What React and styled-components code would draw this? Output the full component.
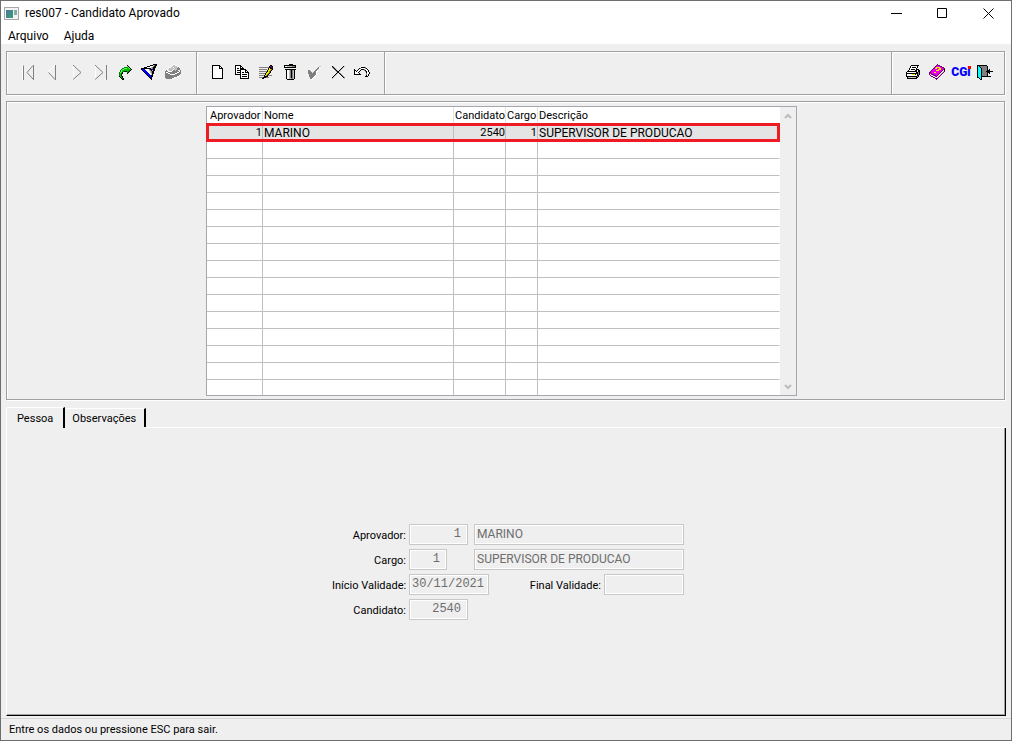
import React from "react";
import styled, { createGlobalStyle } from "styled-components";

const GlobalStyle = createGlobalStyle`
  * {
    box-sizing: border-box;
  }
  body {
    margin: 0;
    color: #000;
    font-family: Roboto, "Liberation Sans", sans-serif;
    font-size: 11px;
    line-height: 16px;
  }
  button {
    padding: 0;
    border: none;
    background: none;
    color: inherit;
    font: inherit;
  }
`;

const Window = styled.div`
  display: flex;
  flex-direction: column;
  min-height: 100vh;
  border: 1px solid #6e6e6e;
  background-color: #efefef;
`;

const TitleBar = styled.header`
  display: flex;
  align-items: center;
  height: 25px;
  padding: 0 0 1px 3px;
  background-color: white;
`;

const Title = styled.h1`
  flex: 1;
  margin: 0 0 0 6px;
  font-size: 12px;
  font-weight: normal;
`;

const WindowButton = styled.button`
  display: flex;
  align-items: center;
  justify-content: center;
  width: 46px;
  height: 24px;
`;

const MenuBar = styled.nav`
  display: flex;
  align-items: flex-end;
  gap: 15px;
  height: 18px;
  padding-left: 7px;
  background-color: white;
  font-size: 12px;
`;

const Groove = styled.div`
  border: 1px solid #a0a0a0;
  box-shadow: 1px 1px 0 white, inset 1px 1px 0 white;
`;

const ToolBar = styled(Groove)`
  display: flex;
  height: 44px;
  margin: 7px 6px 0 5px;
`;

const ToolGroup = styled.div`
  display: flex;
  align-items: center;
  padding: 0 ${props => props.$padEnd}px 2px ${props => props.$padStart || 9}px;
  margin-left: ${props => (props.$last ? "auto" : "0")};
  border-right: ${props => (props.$last ? "none" : "1px solid #a0a0a0")};
  border-left: ${props => (props.$last ? "1px solid #a0a0a0" : "none")};
  box-shadow: ${props => (props.$last ? "inset 1px 0 0 white" : "1px 0 0 white")};
`;

const ToolButton = styled.button`
  display: flex;
  align-items: center;
  justify-content: center;
  width: 24px;
  height: 24px;
`;

const Logo = styled.span`
  position: relative;
  color: #0000ff;
  font-size: 12px;
  font-weight: 900;
  &::after {
    content: "";
    position: absolute;
    top: 2px;
    right: 0;
    width: 3px;
    height: 3px;
    background-color: #ff0000;
  }
`;

const GridPanel = styled(Groove)`
  display: flex;
  justify-content: center;
  margin: 6px 6px 0 5px;
  padding: 4px 8px 3px 0;
`;

const GridBox = styled.div`
  display: flex;
  border: 1px solid #a6a6ae;
  background-color: white;
`;

const Table = styled.table`
  table-layout: fixed;
  width: 573px;
  border-collapse: separate;
  border-spacing: 0;
`;

const HeadCell = styled.th`
  height: 18px;
  padding: 0 0 0 ${props => props.$pad || 1}px;
  border-right: 1px solid ${props => (props.$last ? "white" : "#e4e4e4")};
  font-weight: normal;
  text-align: left;
  white-space: nowrap;
`;

const Row = styled.tr`
  position: relative;
  height: ${props => (props.$last ? 15 : 17)}px;
  background-color: ${props => (props.$selected ? "#e4e4e4" : "white")};
  &::after {
    content: "";
    display: ${props => (props.$selected ? "block" : "none")};
    position: absolute;
    top: -2px;
    right: 0;
    bottom: 0;
    left: -1px;
    border: 3px solid #ed1c24;
  }
`;

const Cell = styled.td`
  padding: 0 0 0 1px;
  border-right: 1px solid #c0c0c0;
  border-bottom: ${props => (props.$lastRow ? "none" : "1px solid #c0c0c0")};
  font-size: ${props => (props.$align ? 11 : 12)}px;
  line-height: 14px;
  text-align: ${props => props.$align || "left"};
  &:last-child {
    border-right-color: white;
  }
`;

const ScrollBar = styled.div`
  display: flex;
  flex-direction: column;
  justify-content: space-between;
  width: 16px;
  background-color: #efefef;
`;

const ScrollButton = styled.button`
  display: flex;
  align-items: center;
  justify-content: center;
  height: 17px;
`;

const Tabs = styled.div`
  display: flex;
  align-items: flex-end;
  margin: 7px 5px 0 5px;
`;

const Tab = styled.button`
  height: ${props => (props.$active ? 21 : 19)}px;
  padding: ${props => (props.$active ? "1px 10px 0" : "2px 8px 0 7px")};
  margin-bottom: ${props => (props.$active ? 0 : 1)}px;
  border-top: 1px solid white;
  border-left: ${props => (props.$active ? "1px solid white" : "none")};
  border-right: 2px solid black;
  border-top-left-radius: 2px;
`;

const TabLine = styled.div`
  flex: 1;
  height: 1px;
  background-color: white;
`;

const TabPanel = styled.section`
  display: flex;
  flex: 1;
  align-items: center;
  justify-content: center;
  margin: 0 5px 2px 5px;
  padding: 1px 0 0 4px;
  border: 1px solid black;
  border-top: none;
  border-left-color: white;
  box-shadow: inset -1px -1px 0 #a0a0a0;
`;

const Form = styled.form`
  display: flex;
  flex-direction: column;
  gap: 4px;
  width: 352px;
`;

const FormRow = styled.div`
  display: flex;
  align-items: center;
  gap: 3px;
`;

const Label = styled.label`
  width: ${props => (props.$auto ? "auto" : "74px")};
  margin-left: ${props => (props.$auto ? "auto" : "0")};
  padding-top: 2px;
  text-align: right;
  white-space: nowrap;
`;

const Field = styled.input`
  width: ${props => props.$width}px;
  height: 21px;
  padding: 0 ${props => (props.$number ? 6 : 2)}px ${props => (props.$mono ? 1 : 2)}px 2px;
  border: 1px solid #c8c8c8;
  box-shadow: inset 0 0 0 1px white;
  background-color: #efefef;
  color: #6d6d6d;
  font-family: ${props =>
    props.$mono ? '"Liberation Mono", monospace' : 'Roboto, "Liberation Sans", sans-serif'};
  font-size: 12px;
  text-align: ${props => (props.$number ? "right" : "left")};
  margin-left: ${props => (props.$end ? "auto" : "0")};
  outline: none;
`;

const StatusBar = styled.footer`
  height: 22px;
  padding: 3px 8px 0;
  border-top: 1px solid #d7d7d7;
`;

const palette = {
  k: "#000000",
  w: "#ffffff",
  g: "#808080",
  l: "#c0c0c0",
  G: "#00c000",
  E: "#008000",
  H: "#70f070",
  y: "#f8f000",
  o: "#808000",
  m: "#e800e8",
  p: "#700070",
  c: "#00ffff",
  b: "#0000ff"
};

const icons = {
  jump: [
    "................",
    "..........k.....",
    "..........Hk....",
    ".......EEEGHk...",
    ".....EEHHHGGHk..",
    "....EHHGGGGGGGk.",
    "...EHGGGGGGGEk..",
    "...EHGEkkkGEk...",
    "..EHGk....Ek....",
    "..EGEk....k.....",
    "..EGk...........",
    "..EGk...........",
    "..kGEk..........",
    "...kGk..........",
    "....kEk.........",
    ".....kk........."
  ],
  filter: [
    "............kkkk",
    ".........kkklgkk",
    "......kkkwwwgkk.",
    "...kkkwwwwlgkkk.",
    "kkkkkkkkkklgkk..",
    "kbbbwwwwgkkbkk..",
    ".kbbbwwwlgklkk..",
    "..kbbbwwwlgkk...",
    "...kbbbwwlgkk...",
    "....kbbbwwlkk...",
    ".....kbbbwlk....",
    "......kbbbkk....",
    ".......kbbkk....",
    "........kbk.....",
    ".........kk.....",
    "..........k....."
  ],
  open: [
    "........ww......",
    ".......wllww....",
    "......wlllllww..",
    "....wwllwllllgw.",
    "...wllllllllggg.",
    "..wlllllwlllggg.",
    ".gwwlllwgglgg..g",
    "gggwwwwgggggggwg",
    "gwwgggggggggwwgg",
    "gggwwgggggwwgggg",
    "gggggwwwwwggggg.",
    "ggggggggggggggw.",
    "ggggggggggggww..",
    "gggggggggww.....",
    ".ggggggww......."
  ],
  page: [
    "................",
    "..kkkkkkkk......",
    "..kwwwwwwkk.....",
    "..kwwwwwwkwk....",
    "..kwwwwwwkkkk...",
    "..kwwwwwwwwwk...",
    "..kwwwwwwwwwk...",
    "..kwwwwwwwwwk...",
    "..kwwwwwwwwwk...",
    "..kwwwwwwwwwk...",
    "..kwwwwwwwwwk...",
    "..kwwwwwwwwwk...",
    "..kwwwwwwwwwk...",
    "..kwwwwwwwwwk...",
    "..kkkkkkkkkkk..."
  ],
  copy: [
    "................",
    ".kkkkkk.........",
    ".kwwwwkk........",
    ".kwwwwkwk.......",
    ".kwkkwkkkk......",
    ".kwwwwkkkkkk....",
    ".kwkkkkwwwwkk...",
    ".kwwwwkwwwwkwk..",
    ".kwkkkkwkkwkkkk.",
    ".kwwwwkwwwwwwwk.",
    ".kkkkkkwkkkkkwk.",
    "......kwwwwwwwk.",
    "......kwkkkkkwk.",
    "......kwwwwwwwk.",
    "......kkkkkkkkk."
  ],
  edit: [
    "................",
    "............kk..",
    "...........kppk.",
    ".ggggggggggkkpp.",
    "..........kykkk.",
    ".gggggggg.kyyok.",
    ".........kyyok..",
    ".ggggggggkyok...",
    "........kyyok...",
    ".ggggggkyyok....",
    ".......kyok.....",
    ".gggggkyokgggg..",
    "......kkkk......",
    ".ggggkkkggg.....",
    "....kk.........."
  ],
  trash: [
    ".......kkkk.....",
    "..kkkkkkkkkkkk..",
    "..kwwlllllggok..",
    "..kkkkkkkkkkkk..",
    "................",
    "...kkkkkkkkkkk..",
    "....kwwlgkglk...",
    "....kwwlgkglk...",
    "....kwwlgkglk...",
    "....kwwlgkglk...",
    "....kwwlgkglk...",
    "....kwwlgkglk...",
    "....kwwlgkglk...",
    "....kwwlgkglk...",
    "....kwwllgglk...",
    ".....kkkkkkk...."
  ],
  check: [
    "................",
    "................",
    ".............ll.",
    "............gww.",
    "...........ggw..",
    "..........ggw...",
    "..gg.....ggw....",
    "..ggg...ggww....",
    "..gggg.gggw.....",
    "..ggggggggw.....",
    "...gggggggw.....",
    "...ggggggw......",
    "...gggggw.......",
    "....gggww.......",
    "....ggw.........",
    ".....ww........."
  ],
  remove: [
    "................",
    "................",
    "..kl.........kl.",
    "..gkl.......kl..",
    "...gkl.....kl...",
    "....gkl...kl....",
    ".....gkl.kl.....",
    "......gkkl......",
    ".......kkl......",
    "......kl.kg.....",
    ".....kl...kg....",
    "....kl.....kg...",
    "...kl.......kg..",
    "..kl.........kg.",
    "..l...........l."
  ],
  undo: [
    "................",
    "................",
    "................",
    ".......kkkkg....",
    ".....kgwwwwgk...",
    "k...kwwkkkgwwk..",
    "kk.kwwk...gkwwk.",
    "kwkwwk.....gkwk.",
    "kwwwk.......kwwk",
    "kwwwwk......gwwk",
    "kkkkkkk.....gwk.",
    "............kwk.",
    "...........kkk.."
  ],
  print: [
    "................",
    "......kkkkkkkk..",
    ".....kwwwwwwk...",
    ".....kwkkkkwk...",
    "....kwwwwwwk....",
    "....kwkkkkwkkk..",
    "...kwwwwwwkk.kk.",
    "..kkkkkkkkkk.kk.",
    ".kwwwwwwwwwkkgk.",
    ".kkkkkkkkkkkkgk.",
    ".kwwwwwyyykwkgk.",
    ".kwwwwwwwwwwkk..",
    ".kkkkkkkkkkkgk..",
    "..kllllllllkk...",
    "..kkkkkkkkkk...."
  ],
  help: [
    "........p.......",
    ".......pmpp.....",
    "......pmmmmpp...",
    ".....pmyyyymmpp.",
    "....pmyymmyymmmp",
    "...pmmmmmyyymmpk",
    "..pmmmmyyymmmpwk",
    ".pmmmmmmmmmmpwlp",
    "ppmmmyymmmmpwlp.",
    "pmpmmmmmmmpwlp..",
    "pwmppmmmmpwlp...",
    ".pwwmppmpwlp....",
    "..ppwwmpwlp.....",
    "....ppwwlp......",
    "......ppp.......",
    ".......p........"
  ],
  exit: [
    "................",
    "kkkkkkkkkk......",
    "kckgggggggk.....",
    "kcckggggggk.....",
    "kccckgggggk.....",
    "kccckgggggk.k...",
    "kccckgggggkkk...",
    "kccckggggkkkkkkk",
    "kccckgggggkkk...",
    "kccckgggggk.k...",
    "kccckgggggk.....",
    "kccckgggggk.....",
    "kccckkkkkkkkkk..",
    "kkcck...........",
    "..kck...........",
    "...kk..........."
  ]
};

const PixelIcon = ({ name }) => (
  <svg width="16" height="16" viewBox="0 0 16 16" shapeRendering="crispEdges" aria-hidden="true">
    {icons[name].map((line, y) =>
      [...line].map((ch, x) =>
        ch === "." ? null : (
          <rect key={`${x}-${y}`} x={x} y={y} width="1" height="1" fill={palette[ch]} />
        )
      )
    )}
  </svg>
);

const LineIcon = ({ light, dark }) => (
  <svg width="16" height="16" viewBox="0 0 16 16" fill="none" aria-hidden="true">
    <path d={light} stroke="white" />
    <path d={dark} stroke="#808080" />
  </svg>
);

const navTools = [
  {
    label: "Primeiro",
    icon: <LineIcon light="M1.5 1V16M12 1L6 8" dark="M2.5 1.5V16M12 1.5L6 8.5L12 15M12.5 1V16" />
  },
  { label: "Anterior", icon: <LineIcon light="M10 1L3 8" dark="M10.500 1V16M3.500 8.500L10 15.500" /> },
  { label: "Próximo", icon: <LineIcon light="M4.500 1V16" dark="M4 1L12 8.500L4 15.500" /> },
  {
    label: "Último",
    icon: <LineIcon light="M2.500 1V16M11.500 15.500H14" dark="M2 1L10 8.500L2 15.500M13.500 1V16" />
  },
  { label: "Ir para", icon: <PixelIcon name="jump" /> },
  { label: "Filtrar", icon: <PixelIcon name="filter" /> },
  { label: "Abrir", icon: <PixelIcon name="open" /> }
];

const editTools = [
  { label: "Novo", icon: <PixelIcon name="page" /> },
  { label: "Copiar", icon: <PixelIcon name="copy" /> },
  { label: "Modificar", icon: <PixelIcon name="edit" /> },
  { label: "Excluir", icon: <PixelIcon name="trash" /> },
  { label: "Confirmar", icon: <PixelIcon name="check" /> },
  { label: "Cancelar", icon: <PixelIcon name="remove" /> },
  { label: "Desfazer", icon: <PixelIcon name="undo" /> }
];

const systemTools = [
  { label: "Imprimir", icon: <PixelIcon name="print" /> },
  { label: "Manual", icon: <PixelIcon name="help" /> },
  { label: "CGi", icon: <Logo>CGi</Logo> },
  { label: "Sair", icon: <PixelIcon name="exit" /> }
];

const columns = [
  { name: "Aprovador", width: 56, align: "right", pad: 3 },
  { name: "Nome", width: 191 },
  { name: "Candidato", width: 52, align: "right" },
  { name: "Cargo", width: 32, align: "right" },
  { name: "Descrição", width: 242 }
];

const rows = [["1", "MARINO", "2540", "1", "SUPERVISOR DE PRODUCAO"]];
const visibleRows = 16;

const Tools = ({ tools }) =>
  tools.map(({ label, icon }) => (
    <ToolButton key={label} type="button" aria-label={label}>
      {icon}
    </ToolButton>
  ));

const AppIcon = () => (
  <svg width="15" height="13" viewBox="0 0 15 13" aria-hidden="true">
    <defs>
      <linearGradient id="pane" x1="0" y1="0" x2="1" y2="1">
        <stop offset="0" stopColor="#4a78a0" />
        <stop offset="1" stopColor="#3c9c70" />
      </linearGradient>
    </defs>
    <rect x=".5" y=".5" width="14" height="12" fill="#f4f4f4" stroke="#a8a8a8" />
    <rect x="2" y="3" width="7" height="8" fill="url(#pane)" />
    <rect x="10" y="3" width="3" height="5" fill="#7fb09c" />
  </svg>
);

const CandidateGrid = () => (
  <GridBox>
    <Table>
      <colgroup>
        {columns.map(({ name, width }) => (
          <col key={name} style={{ width }} />
        ))}
      </colgroup>
      <thead>
        <tr>
          {columns.map(({ name, pad }, i) => (
            <HeadCell key={name} $pad={pad} $last={i === columns.length - 1}>
              {name}
            </HeadCell>
          ))}
        </tr>
      </thead>
      <tbody>
        {Array.from({ length: visibleRows }, (_, i) => (
          <Row key={i} $selected={i === 0} $last={i === visibleRows - 1}>
            {columns.map(({ name, align }, j) => (
              <Cell key={name} $align={align} $lastRow={i === visibleRows - 1}>
                {rows[i] && rows[i][j]}
              </Cell>
            ))}
          </Row>
        ))}
      </tbody>
    </Table>
    <ScrollBar>
      <ScrollButton type="button" aria-label="Rolar para cima">
        <svg width="8" height="6" viewBox="0 0 8 6" fill="none" stroke="#bcbcbc" strokeWidth="2">
          <path d="M1 5L4 2L7 5" />
        </svg>
      </ScrollButton>
      <ScrollButton type="button" aria-label="Rolar para baixo">
        <svg width="8" height="6" viewBox="0 0 8 6" fill="none" stroke="#bcbcbc" strokeWidth="2">
          <path d="M1 1L4 4L7 1" />
        </svg>
      </ScrollButton>
    </ScrollBar>
  </GridBox>
);

const PersonForm = () => (
  <Form>
    <FormRow>
      <Label htmlFor="aprovador">Aprovador:</Label>
      <Field id="aprovador" $width={59} $mono $number defaultValue="1" readOnly />
      <Field aria-label="Nome do aprovador" $width={210} $end defaultValue="MARINO" readOnly />
    </FormRow>
    <FormRow>
      <Label htmlFor="cargo">Cargo:</Label>
      <Field id="cargo" $width={38} $mono $number defaultValue="1" readOnly />
      <Field
        aria-label="Descrição do cargo"
        $width={210}
        $end
        defaultValue="SUPERVISOR DE PRODUCAO"
        readOnly
      />
    </FormRow>
    <FormRow>
      <Label htmlFor="inicio">Início Validade:</Label>
      <Field id="inicio" $width={80} $mono defaultValue="30/11/2021" readOnly />
      <Label htmlFor="final" $auto>
        Final Validade:
      </Label>
      <Field id="final" $width={80} $mono defaultValue="" readOnly />
    </FormRow>
    <FormRow>
      <Label htmlFor="candidato">Candidato:</Label>
      <Field id="candidato" $width={59} $mono $number defaultValue="2540" readOnly />
    </FormRow>
  </Form>
);

const App = () => (
  <>
    <GlobalStyle />
    <Window>
      <TitleBar>
        <AppIcon />
        <Title>res007 - Candidato Aprovado</Title>
        <WindowButton type="button" aria-label="Minimizar">
          <svg width="11" height="11" viewBox="0 0 11 11" stroke="black">
            <path d="M0 5.5H11" />
          </svg>
        </WindowButton>
        <WindowButton type="button" aria-label="Maximizar">
          <svg width="10" height="10" viewBox="0 0 10 10" stroke="black" fill="none">
            <path d="M.5 .5H9.5V9.5H.5Z" />
          </svg>
        </WindowButton>
        <WindowButton type="button" aria-label="Fechar">
          <svg width="11" height="11" viewBox="0 0 11 11" stroke="black">
            <path d="M.5 .5L10.5 10.5M10.5 .5L.5 10.5" />
          </svg>
        </WindowButton>
      </TitleBar>
      <MenuBar>
        <button type="button">Arquivo</button>
        <button type="button">Ajuda</button>
      </MenuBar>
      <ToolBar role="toolbar">
        <ToolGroup $padStart={10} $padEnd={11}>
          <Tools tools={navTools} />
        </ToolGroup>
        <ToolGroup $padEnd={10}>
          <Tools tools={editTools} />
        </ToolGroup>
        <ToolGroup $padEnd={7} $last>
          <Tools tools={systemTools} />
        </ToolGroup>
      </ToolBar>
      <GridPanel>
        <CandidateGrid />
      </GridPanel>
      <Tabs role="tablist">
        <Tab type="button" role="tab" aria-selected="true" $active>
          Pessoa
        </Tab>
        <Tab type="button" role="tab" aria-selected="false">
          Observações
        </Tab>
        <TabLine />
      </Tabs>
      <TabPanel role="tabpanel">
        <PersonForm />
      </TabPanel>
      <StatusBar>Entre os dados ou pressione ESC para sair.</StatusBar>
    </Window>
  </>
);

export default App;
